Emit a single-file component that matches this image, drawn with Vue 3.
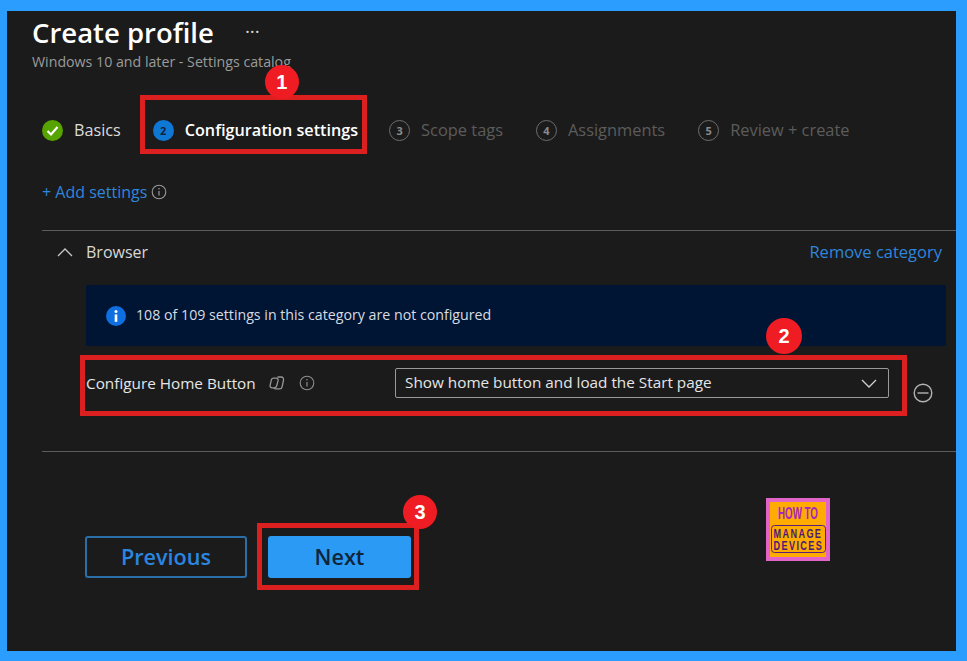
<script setup>
const steps = [
  { n: 3, label: 'Scope tags' },
  { n: 4, label: 'Assignments' },
  { n: 5, label: 'Review + create' }
]
</script>

<template>
  <div class="frame">
    <div class="panel">
      <div class="title-row">
        <h1 class="title">Create profile</h1>
        <span class="more">···</span>
      </div>
      <div class="subtitle">Windows 10 and later - Settings catalog</div>

      <div class="body">
        <div class="steps">
          <div class="step done">
            <svg class="step-icon" viewBox="0 0 21 21">
              <circle cx="10.5" cy="10.5" r="10.5" fill="#57a300" />
              <path d="M5.5 11l3.5 3.5 6.5-7.5" fill="none" stroke="#fff" stroke-width="2.2" />
            </svg>
            <span class="step-label">Basics</span>
          </div>
          <div class="step current">
            <span class="step-num active">2</span>
            <span class="step-label">Configuration settings</span>
            <div class="mark mark-step">
              <span class="badge badge-1">1</span>
            </div>
          </div>
          <div v-for="s in steps" :key="s.n" class="step muted">
            <span class="step-num">{{ s.n }}</span>
            <span class="step-label">{{ s.label }}</span>
          </div>
        </div>

        <div class="add-row">
          <span class="add-link">+ Add settings</span>
          <svg class="info-outline" viewBox="0 0 16 16">
            <circle cx="8" cy="8" r="6.8" fill="none" stroke="#9a9a9a" stroke-width="1.1" />
            <path d="M8 7v4.4" stroke="#9a9a9a" stroke-width="1.2" />
            <circle cx="8" cy="4.8" r=".8" fill="#9a9a9a" />
          </svg>
        </div>

        <section class="category">
          <div class="cat-head">
            <svg class="chevron-up" viewBox="0 0 16 9">
              <path d="M1 8l7-7 7 7" fill="none" stroke="#c8c8c8" stroke-width="1.3" />
            </svg>
            <span class="cat-name">Browser</span>
            <span class="remove">Remove category</span>
          </div>

          <div class="notice">
            <svg class="notice-icon" viewBox="0 0 20 20">
              <circle cx="10" cy="10" r="10" fill="#0f6fe0" />
              <rect x="8.7" y="8.4" width="2.6" height="7.4" fill="#fff" />
              <circle cx="10" cy="5.6" r="1.5" fill="#fff" />
            </svg>
            <span class="lift">108 of 109 settings in this category are not configured</span>
          </div>

          <div class="setting">
            <div class="setting-label">
              <span>Configure Home Button</span>
              <svg class="shared-icon" viewBox="0 0 16 16">
                <path d="M4.6 3.2h2.6a2 2 0 0 1 1.9 2.5L7.6 11a2.4 2.4 0 0 1-2.3 1.8H3a2 2 0 0 1-1.9-2.5l1.2-5.3a2.4 2.4 0 0 1 2.3-1.8z" fill="none" stroke="#969696" stroke-width="1.3" />
                <path d="M8.4 2h3.8a2.4 2.4 0 0 1 2.3 3l-1.4 6.8a2.6 2.6 0 0 1-2.5 2.1H6.2a2 2 0 0 1-1.4-.9" fill="none" stroke="#969696" stroke-width="1.3" />
              </svg>
              <svg class="info-outline" viewBox="0 0 16 16">
                <circle cx="8" cy="8" r="6.8" fill="none" stroke="#8f8f8f" stroke-width="1.1" />
                <path d="M8 7v4.4" stroke="#8f8f8f" stroke-width="1.2" />
                <circle cx="8" cy="4.8" r=".8" fill="#8f8f8f" />
              </svg>
            </div>
            <div class="select">
              <span class="lift">Show home button and load the Start page</span>
              <svg class="chevron-down" viewBox="0 0 16 9">
                <path d="M1 1l7 7 7-7" fill="none" stroke="#d0d0d0" stroke-width="1.3" />
              </svg>
            </div>
            <svg class="minus" viewBox="0 0 20 20">
              <circle cx="10" cy="10" r="8.8" fill="none" stroke="#b4b4b4" stroke-width="1.4" />
              <path d="M4.5 10h11" stroke="#b4b4b4" stroke-width="1.4" />
            </svg>
            <div class="mark mark-setting">
              <span class="badge badge-2">2</span>
            </div>
          </div>
        </section>

        <div class="footer">
          <button class="btn btn-prev">Previous</button>
          <div class="next-wrap">
            <button class="btn btn-next">Next</button>
            <div class="mark mark-next">
              <span class="badge badge-3">3</span>
            </div>
          </div>
          <svg class="logo" viewBox="0 0 64 63">
            <rect width="64" height="63" fill="#e264c8" />
            <rect x="4" y="4" width="56" height="55" fill="#ffab00" />
            <text transform="translate(12 21) scale(.61 1)" class="logo-how">HOW TO</text>
            <rect x="5.5" y="27.5" width="54" height="27" rx="3" fill="none" stroke="#5a1f7a" stroke-width="1" />
            <text transform="translate(7.5 39.5) scale(.7 1)" class="logo-small">MANAGE</text>
            <text transform="translate(7.5 51.5) scale(.7 1)" class="logo-small">DEVICES</text>
          </svg>
        </div>
      </div>
    </div>
  </div>
</template>

<style>
html, body {
  margin: 0;
  background: #2a9dff;
}
</style>

<style scoped>
.frame {
  box-sizing: border-box;
  width: 967px;
  height: 661px;
  padding: 11px 11px 10px 7px;
  background: #2a9dff;
  font-family: "Open Sans", "Liberation Sans", sans-serif;
}

.panel {
  box-sizing: border-box;
  height: 100%;
  padding: 7px 0 0 25px;
  background: #1b1b1b;
  color: #e6e6e6;
}

.title-row {
  display: flex;
  align-items: center;
  height: 30px;
}

.title {
  margin: 0;
  font-size: 27.5px;
  font-weight: 600;
  line-height: 30px;
  color: #fff;
}

.more {
  margin-left: 31px;
  margin-top: -4px;
  font-size: 19px;
  color: #d8d8d8;
}

.subtitle {
  margin-top: 6px;
  font-size: 14.2px;
  line-height: 16px;
  color: #9b9b9b;
}

.body {
  margin-left: 10px;
}

.steps {
  display: flex;
  gap: 33px;
  height: 32px;
  margin-top: 44px;
}

.step {
  position: relative;
  display: flex;
  align-items: center;
  gap: 11px;
  font-size: 16.2px;
  color: #dcdcdc;
}

.step.done {
  margin-right: -1px;
}

.step.current {
  margin-right: -2px;
  font-weight: 600;
  color: #fff;
}

.step.muted {
  font-size: 16.4px;
  color: #5c5c5c;
}

.step.muted .step-label {
  padding-bottom: 2px;
}

.step-icon {
  width: 21px;
  height: 21px;
}

.step-num {
  box-sizing: border-box;
  display: flex;
  align-items: center;
  justify-content: center;
  width: 21px;
  height: 21px;
  border: 1.5px solid #6e6e6e;
  border-radius: 50%;
  font-size: 11px;
  font-weight: 700;
  color: #8a8a8a;
}

.step-num.active {
  border: 0;
  background: #0f78d4;
  color: #10243a;
}

.mark {
  position: absolute;
  box-sizing: border-box;
  border: 5px solid #dc1f1f;
}

.mark-step {
  top: -19px;
  right: -9px;
  bottom: -8px;
  left: -13px;
}

.mark-setting {
  top: -13px;
  right: 39px;
  bottom: -18px;
  left: -6px;
}

.mark-next {
  top: -13px;
  right: -8px;
  bottom: -12px;
  left: -11px;
}

.badge {
  position: absolute;
  display: flex;
  align-items: center;
  justify-content: center;
  width: 34px;
  height: 34px;
  border-radius: 50%;
  background: #f01c24;
  font-family: "Liberation Sans", sans-serif;
  font-size: 20px;
  font-weight: 700;
  color: #fff;
}

.badge-1 {
  top: -35px;
  left: 120px;
}

.badge-2 {
  top: -42px;
  right: 100px;
  width: 36px;
  height: 36px;
}

.badge-3 {
  top: -33px;
  right: -23px;
}

.add-row {
  display: flex;
  align-items: center;
  gap: 4px;
  height: 20px;
  margin-top: 36px;
  font-size: 16px;
}

.add-link {
  color: #2f86dd;
}

.info-outline {
  width: 16px;
  height: 16px;
}

.category {
  margin-top: 28px;
  padding: 0 10px 53px 44px;
  border-top: 1px solid #5c5c5c;
  border-bottom: 1px solid #5c5c5c;
}

.cat-head {
  position: relative;
  display: flex;
  align-items: center;
  justify-content: space-between;
  height: 42px;
  font-size: 16px;
}

.chevron-up {
  position: absolute;
  left: -29px;
  top: 17px;
  width: 16px;
  height: 9px;
}

.cat-name {
  color: #d8d8d8;
}

.remove {
  margin: 0 4px 2px 0;
  font-size: 16.5px;
  color: #2f86dd;
}

.notice {
  display: flex;
  align-items: center;
  gap: 10px;
  height: 61px;
  margin-top: 12px;
  padding-left: 20px;
  background: #001433;
  font-size: 14.2px;
  color: #d8dce2;
}

.notice-icon {
  width: 20px;
  height: 20px;
}

.lift {
  padding-bottom: 2px;
}

.setting {
  position: relative;
  display: flex;
  height: 30px;
  margin-top: 22px;
}

.setting-label {
  display: flex;
  align-items: center;
  width: 309px;
  font-size: 15.3px;
  color: #e6e6e6;
}

.shared-icon {
  width: 16px;
  height: 16px;
  margin-left: 13px;
}

.setting-label .info-outline {
  margin-left: 14px;
}

.select {
  box-sizing: border-box;
  display: flex;
  align-items: center;
  justify-content: space-between;
  width: 494px;
  height: 30px;
  padding: 0 11px 0 9px;
  border: 1px solid #9a9a9a;
  border-radius: 2px;
  font-size: 15.3px;
  color: #e6e6e6;
}

.chevron-down {
  width: 16px;
  height: 9px;
}

.minus {
  width: 20px;
  height: 20px;
  margin: 15px 0 0 24px;
}

.footer {
  display: flex;
  align-items: flex-end;
  gap: 21px;
  height: 80px;
  margin-top: 46px;
  padding-left: 43px;
}

.btn {
  box-sizing: border-box;
  height: 42px;
  padding-bottom: 3px;
  border-radius: 3px;
  font-family: inherit;
  font-size: 21.6px;
  font-weight: 600;
}

.btn-prev {
  width: 162px;
  border: 2px solid #2a6fa8;
  background: transparent;
  color: #2a86e0;
}

.next-wrap {
  position: relative;
  display: flex;
}

.btn-next {
  width: 143px;
  border: 0;
  background: #2a9af5;
  color: #10243a;
}

.logo {
  align-self: flex-start;
  width: 64px;
  height: 63px;
  margin-left: 334px;
}

.logo-how {
  font-family: "Liberation Sans", sans-serif;
  font-size: 16px;
  font-weight: 700;
  fill: #a624c4;
}

.logo-small {
  font-family: "Liberation Sans", sans-serif;
  font-size: 13px;
  font-weight: 700;
  letter-spacing: 2px;
  fill: #4a1a78;
}
</style>
